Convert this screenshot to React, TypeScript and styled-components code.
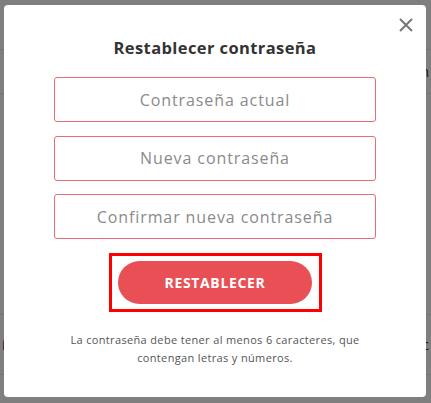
import React from "react";
import styled, { createGlobalStyle } from "styled-components";

const GlobalStyle = createGlobalStyle`
  html, body { margin: 0; padding: 0; }
  body {
    width: 431px;
    height: 403px;
    overflow: hidden;
    background: #ffffff;
    font-family: "Open Sans", "Liberation Sans", sans-serif;
  }
`;

const Page = styled.div`
  width: 431px;
  height: 403px;
  display: flex;
  flex-direction: column;
`;

const PageRow = styled.div<{ $h: number }>`
  height: ${(p) => p.$h}px;
  border-bottom: 1px solid #e6e6e6;
  display: flex;
  align-items: center;
  justify-content: space-between;
  padding: 0 2px;
  font-size: 14px;
  color: #1d2b4f;
  box-sizing: border-box;
`;

const Overlay = styled.div`
  position: fixed;
  inset: 0;
  background: rgba(0, 0, 0, 0.5);
  display: flex;
  align-items: flex-start;
  padding: 5px 0 0 4px;
`;

const Modal = styled.div`
  position: relative;
  width: 422px;
  height: 392px;
  background: #ffffff;
  border-radius: 4px;
  box-sizing: border-box;
  padding-top: 31px;
  display: flex;
  flex-direction: column;
  align-items: center;
`;

const CloseButton = styled.button`
  position: absolute;
  top: 12px;
  right: 12px;
  width: 16px;
  height: 16px;
  padding: 0;
  border: none;
  background: transparent;
  display: flex;
  align-items: center;
  justify-content: center;
  cursor: pointer;
`;

const Title = styled.h2`
  margin: 0 0 17px;
  font-size: 16.5px;
  line-height: 24px;
  letter-spacing: 0.4px;
  font-weight: 700;
  color: #333333;
`;

const Field = styled.input`
  width: 322px;
  height: 45px;
  box-sizing: border-box;
  border: 1px solid #ef6a70;
  border-radius: 3px;
  margin-bottom: 13.5px;
  text-align: center;
  font-family: inherit;
  font-size: 16px;
  letter-spacing: 0.9px;
  color: #444;
  outline: none;
  &::placeholder { color: #8a8a8a; }
`;

const Highlight = styled.div`
  width: 213px;
  height: 59px;
  box-sizing: border-box;
  border: 3px solid #ff0000;
  display: flex;
  align-items: center;
  justify-content: center;
`;

const SubmitButton = styled.button`
  width: 194px;
  height: 43px;
  border: none;
  border-radius: 22px;
  background: #e95055;
  color: #ffffff;
  font-family: inherit;
  font-weight: 700;
  font-size: 14px;
  letter-spacing: 0.65px;
  margin-top: 1px;
`;

const Hint = styled.p`
  margin: 19px 0 0;
  width: 310px;
  text-align: center;
  font-size: 11px;
  line-height: 18px;
  letter-spacing: 0.35px;
  color: #555555;
`;

export default function App() {
  return (
    <>
      <GlobalStyle />
      <Page>
        <PageRow $h={50} />
        <PageRow $h={44}>
          <span />
          <span>n</span>
        </PageRow>
        <PageRow $h={221} />
        <PageRow $h={60}>
          <span>i</span>
          <span>c</span>
        </PageRow>
      </Page>
      <Overlay>
        <Modal>
          <CloseButton aria-label="Cerrar">
            <svg width="14" height="14" viewBox="0 0 14 14">
              <path d="M1 1 L13 13 M13 1 L1 13" stroke="#777" strokeWidth="2" strokeLinecap="butt" />
            </svg>
          </CloseButton>
          <Title>Restablecer contraseña</Title>
          <Field type="password" placeholder="Contraseña actual" />
          <Field type="password" placeholder="Nueva contraseña" />
          <Field type="password" placeholder="Confirmar nueva contraseña" />
          <Highlight>
            <SubmitButton>RESTABLECER</SubmitButton>
          </Highlight>
          <Hint>
            La contraseña debe tener al menos 6 caracteres, que contengan letras y números.
          </Hint>
        </Modal>
      </Overlay>
    </>
  );
}
